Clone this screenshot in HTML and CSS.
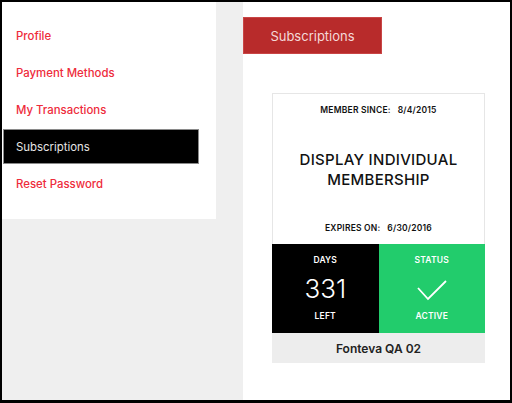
FILE: index.html
```html
<!DOCTYPE html>
<html>
<head>
<meta charset="utf-8">
<link rel="stylesheet" href="styles.css">
</head>
<body>
<div class="frame">
  <aside class="sidebar">
    <nav class="menu">
      <a class="item">Profile</a>
      <a class="item">Payment Methods</a>
      <a class="item">My Transactions</a>
      <a class="item active">Subscriptions</a>
      <a class="item">Reset Password</a>
    </nav>
  </aside>
  <main class="main">
    <div class="tab">Subscriptions</div>
    <section class="card">
      <div class="card-head">
        <div class="meta">MEMBER SINCE:&nbsp;&nbsp; 8/4/2015</div>
        <h2 class="title">DISPLAY INDIVIDUAL<br>MEMBERSHIP</h2>
        <div class="meta expires">EXPIRES ON:&nbsp;&nbsp; 6/30/2016</div>
      </div>
      <div class="stats">
        <div class="stat days">
          <div class="label">DAYS</div>
          <div class="num">331</div>
          <div class="label">LEFT</div>
        </div>
        <div class="stat status">
          <div class="label">STATUS</div>
          <div class="icon">
            <svg width="32" height="30" viewBox="0 0 32 30"><path d="M2 14 L12 25 L30 7" fill="none" stroke="#fff" stroke-width="1.8"/></svg>
          </div>
          <div class="label">ACTIVE</div>
        </div>
      </div>
      <div class="foot">Fonteva QA 02</div>
    </section>
  </main>
</div>
</body>
</html>
```
FILE: styles.css
```css
html, body {
  margin: 0;
  padding: 0;
  background: #000;
}
body {
  width: 512px;
  height: 403px;
  overflow: hidden;
  font-family: Inter, "Open Sans", sans-serif;
}
.frame {
  margin: 2px 2px 3px 2px;
  height: 398px;
  background: #efefef;
  display: flex;
  gap: 27px;
  align-items: flex-start;
}
.sidebar {
  width: 214px;
  background: #fff;
  padding: 16px 0 18px 0;
}
.menu {
  display: flex;
  flex-direction: column;
  gap: 2px;
}
.item {
  display: flex;
  align-items: center;
  height: 35px;
  width: 196px;
  box-sizing: border-box;
  margin-left: 1px;
  padding-left: 13px;
  font-size: 11.4px;
  font-weight: 500;
  color: #ee2b3b;
}
.item.active {
  background: #000;
  color: #e6e6e6;
  font-weight: 400;
  border: 1px solid #8a8a8a;
  padding-left: 12px;
}
.main {
  flex: 1;
  align-self: stretch;
  background: #fff;
  padding-top: 15px;
}
.tab {
  width: 139px;
  height: 37px;
  background: #b82b2b;
  color: #f4d9d9;
  font-size: 13px;
  display: flex;
  align-items: center;
  justify-content: center;
  box-sizing: border-box;
  border: 1px solid #c94545;
}
.card {
  margin: 39px 0 0 29px;
  width: 213px;
  box-sizing: border-box;
  border: 1px solid #e6e6e6;
  border-bottom: none;
}
.card-head {
  padding: 10px 0 10px 0;
  text-align: center;
  color: #111;
}
.meta {
  font-size: 8.5px;
  font-weight: 600;
  line-height: 12px;
  letter-spacing: 0.2px;
}
.title {
  margin: 34px 0 0 0;
  font-size: 15px;
  font-weight: 500;
  line-height: 20px;
  letter-spacing: 0.3px;
}
.expires {
  margin-top: 32px;
}
.stats {
  display: flex;
  margin: 0 -1px;
}
.stat {
  flex: 1;
  height: 89px;
  box-sizing: border-box;
  padding-top: 10px;
  display: flex;
  flex-direction: column;
  align-items: center;
  color: #fff;
}
.days { background: #000; }
.status { background: #22cc6c; }
.label {
  font-size: 8.5px;
  font-weight: 600;
  line-height: 12px;
  letter-spacing: 0.2px;
}
.num {
  margin-top: 8px;
  font-size: 26px;
  font-weight: 300;
  line-height: 30px;
}
.icon {
  margin-top: 8px;
  height: 30px;
}
.icon svg { display: block; }
.stat .label:last-child { margin-top: 6px; }
.foot {
  background: #ededed;
  height: 30px;
  margin: 0 -1px;
  display: flex;
  align-items: center;
  justify-content: center;
  font-size: 12px;
  font-weight: 600;
  color: #222;
}
```
